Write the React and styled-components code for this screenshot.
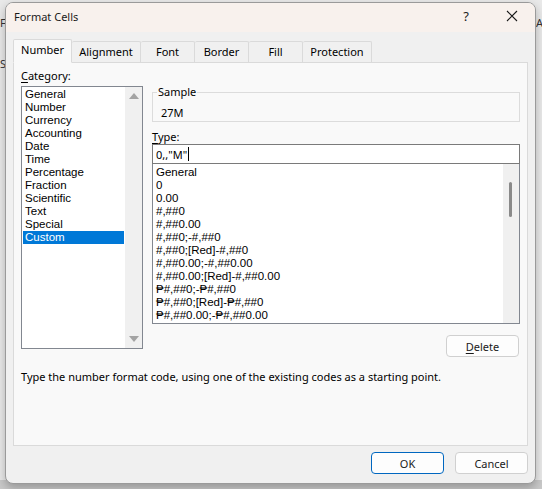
import React from 'react';
import styled, { createGlobalStyle } from 'styled-components';

const categories = [
  'General', 'Number', 'Currency', 'Accounting', 'Date', 'Time',
  'Percentage', 'Fraction', 'Scientific', 'Text', 'Special', 'Custom',
];

const formats = [
  'General',
  '0',
  '0.00',
  '#,##0',
  '#,##0.00',
  '#,##0;-#,##0',
  '#,##0;[Red]-#,##0',
  '#,##0.00;-#,##0.00',
  '#,##0.00;[Red]-#,##0.00',
  '₱#,##0;-₱#,##0',
  '₱#,##0;[Red]-₱#,##0',
  '₱#,##0.00;-₱#,##0.00',
];

const tabs = ['Number', 'Alignment', 'Font', 'Border', 'Fill', 'Protection'];
const tabWidths = [59, 69, 54, 54, 54, 69];

export default function App() {
  return (
    <>
      <GlobalStyle />
      <Desktop>
        <BackLetter style={{ left: 0, top: 16 }}>F</BackLetter>
        <BackLetter style={{ left: 0, top: 57 }}>St</BackLetter>
        <BackLetter style={{ left: 536, top: 16 }}>A</BackLetter>
        <Dialog>
          <TitleBar>
            <Title>Format Cells</Title>
            <TitleButton>?</TitleButton>
            <TitleButton>
              <svg width="12" height="12" viewBox="0 0 12 12">
                <path d="M1 1 L11 11 M11 1 L1 11" stroke="#1a1a1a" strokeWidth="1.1" />
              </svg>
            </TitleButton>
          </TitleBar>
          <Body>
            <TabRow>
              {tabs.map((t, i) => (
                <Tab key={t} $active={i === 0} $w={tabWidths[i]}>{t}</Tab>
              ))}
            </TabRow>
            <Panel>
              <Columns>
                <LeftCol>
                  <Label><u>C</u>ategory:</Label>
                  <CategoryBox>
                    <Items>
                      {categories.map((c) => (
                        <CatItem key={c} $selected={c === 'Custom'}>{c}</CatItem>
                      ))}
                    </Items>
                    <ScrollTrack>
                      <Arrow $up />
                      <Arrow />
                    </ScrollTrack>
                  </CategoryBox>
                </LeftCol>
                <RightCol>
                  <SampleGroup>
                    <legend>Sample</legend>
                    <SampleValue>27M</SampleValue>
                  </SampleGroup>
                  <TypeLabel><u>T</u>ype:</TypeLabel>
                  <TypeInput>0,,"M"<Caret /></TypeInput>
                  <FormatBox>
                    <FormatItems>
                      {formats.map((f) => (
                        <FormatItem key={f}>{f}</FormatItem>
                      ))}
                    </FormatItems>
                    <FormatScroll>
                      <Thumb />
                    </FormatScroll>
                  </FormatBox>
                  <DeleteRow>
                    <Button><u>D</u>elete</Button>
                  </DeleteRow>
                </RightCol>
              </Columns>
              <Hint>Type the number format code, using one of the existing codes as a starting point.</Hint>
            </Panel>
            <Footer>
              <Button $default>OK</Button>
              <Button>Cancel</Button>
            </Footer>
          </Body>
        </Dialog>
      </Desktop>
    </>
  );
}

const GlobalStyle = createGlobalStyle`
  body {
    margin: 0;
    font-family: "Noto Sans", "Open Sans", sans-serif;
    font-size: 11px;
    color: #000;
  }
  u { text-decoration-thickness: 1px; text-underline-offset: 2px; }
`;

const Desktop = styled.div`
  position: relative;
  width: 542px;
  height: 489px;
  overflow: hidden;
  background: linear-gradient(to bottom, #e9e9e9 0, #e9e9e9 480px, #c9c9c9 480px);
  padding: 2px 0 0 5px;
  box-sizing: border-box;
`;

const BackLetter = styled.span`
  position: absolute;
  font-size: 11px;
  line-height: 14px;
  color: #333;
`;

const Dialog = styled.div`
  position: relative;
  width: 531px;
  height: 482px;
  border: 1px solid #9a9a9a;
  border-radius: 8px;
  overflow: hidden;
  box-sizing: border-box;
  background: #f0f0f0;
  box-shadow: 0 4px 10px rgba(0, 0, 0, 0.25);
  display: flex;
  flex-direction: column;
`;

const TitleBar = styled.div`
  height: 29px;
  flex: none;
  display: flex;
  align-items: center;
  background: #f8f1ed;
  padding: 0 0 3px 8px;
  box-sizing: border-box;
`;

const Title = styled.div`
  flex: 1;
  color: #1a1a1a;
`;

const TitleButton = styled.div`
  width: 46px;
  height: 26px;
  display: flex;
  align-items: center;
  justify-content: center;
  font-size: 13px;
  color: #1a1a1a;
`;

const Body = styled.div`
  flex: 1;
  display: flex;
  flex-direction: column;
  padding: 7px 7px 0 7px;
`;

const TabRow = styled.div`
  display: flex;
  align-items: flex-end;
  height: 23px;
  position: relative;
  z-index: 1;
`;

const Tab = styled.div`
  width: ${(p) => p.$w}px;
  height: ${(p) => (p.$active ? 24 : 21)}px;
  box-sizing: border-box;
  display: flex;
  align-items: center;
  justify-content: center;
  border: 1px solid #dadada;
  border-bottom: ${(p) => (p.$active ? '1px solid #f9f9f9' : 'none')};
  border-left: ${(p) => (p.$active ? '1px solid #dadada' : 'none')};
  background: ${(p) => (p.$active ? '#f9f9f9' : '#f0f0f0')};
  margin-bottom: ${(p) => (p.$active ? '-1px' : '0')};
  padding-bottom: ${(p) => (p.$active ? '4px' : '2px')};
  border-radius: 2px 2px 0 0;
`;

const Panel = styled.div`
  height: 384px;
  box-sizing: border-box;
  background: #f9f9f9;
  border: 1px solid #dadada;
  padding: 5px 7px 0 7px;
  display: flex;
  flex-direction: column;
`;

const Columns = styled.div`
  display: flex;
  gap: 9px;
`;

const LeftCol = styled.div`
  width: 122px;
  display: flex;
  flex-direction: column;
`;

const Label = styled.div`
  height: 16px;
  line-height: 16px;
  margin-bottom: 2px;
`;

const CategoryBox = styled.div`
  height: 263px;
  box-sizing: border-box;
  border: 1px solid #828790;
  background: #fff;
  display: flex;
`;

const Items = styled.div`
  flex: 1;
  padding: 1px;
`;

const CatItem = styled.div`
  height: 13px;
  line-height: 13px;
  padding-left: 2px;
  font-family: "Liberation Sans", sans-serif;
  font-size: 11.5px;
  background: ${(p) => (p.$selected ? '#0078d7' : 'transparent')};
  color: ${(p) => (p.$selected ? '#fff' : '#000')};
`;

const ScrollTrack = styled.div`
  width: 17px;
  background: #f0f0f0;
  display: flex;
  flex-direction: column;
  justify-content: space-between;
  align-items: center;
  padding: 6px 0;
`;

const Arrow = styled.div`
  width: 0;
  height: 0;
  border-left: 5px solid transparent;
  border-right: 5px solid transparent;
  ${(p) => (p.$up ? 'border-bottom: 6px solid #a3a3a3;' : 'border-top: 6px solid #a3a3a3;')}
`;

const RightCol = styled.div`
  flex: 1;
  display: flex;
  flex-direction: column;
  padding-top: 16px;
`;

const SampleGroup = styled.fieldset`
  margin: 0;
  height: 38px;
  box-sizing: border-box;
  border: 1px solid #dcdcdc;
  border-radius: 0;
  padding: 0 0 0 8px;

  legend {
    padding: 0 1px;
    margin-left: -4px;
    line-height: 16px;
  }
`;

const SampleValue = styled.div`
  line-height: 14px;
  margin-top: 6px;
`;

const TypeLabel = styled.div`
  height: 15px;
  line-height: 15px;
  margin-top: 7px;
`;

const TypeInput = styled.div`
  height: 20px;
  box-sizing: border-box;
  border: 1px solid #7a7a7a;
  background: #fff;
  display: flex;
  align-items: center;
  padding-left: 3px;
`;

const Caret = styled.span`
  display: inline-block;
  width: 1px;
  height: 14px;
  background: #000;
  margin-left: 1px;
`;

const FormatBox = styled.div`
  height: 160px;
  box-sizing: border-box;
  border: 1px solid #828790;
  border-top: none;
  background: #fff;
  display: flex;
`;

const FormatItems = styled.div`
  flex: 1;
  padding: 2px 3px;
  overflow: hidden;
`;

const FormatItem = styled.div`
  height: 13px;
  line-height: 13px;
  white-space: nowrap;
  font-family: "Liberation Sans", sans-serif;
  font-size: 11.5px;
`;

const FormatScroll = styled.div`
  width: 16px;
  background: #f0f0f0;
  position: relative;
`;

const Thumb = styled.div`
  position: absolute;
  left: 6px;
  top: 18px;
  width: 3px;
  height: 35px;
  border-radius: 2px;
  background: #8a8a8a;
`;

const DeleteRow = styled.div`
  display: flex;
  justify-content: flex-end;
  margin-top: 11px;
  padding-right: 1px;
`;

const Button = styled.div`
  width: 73px;
  height: 22px;
  box-sizing: border-box;
  display: flex;
  align-items: center;
  justify-content: center;
  background: #fdfdfd;
  border: 1px solid ${(p) => (p.$default ? '#0067c0' : '#d0d0d0')};
  border-radius: 4px;
  color: #1a1a1a;
`;

const Hint = styled.div`
  margin-top: 12px;
  line-height: 16px;
`;

const Footer = styled.div`
  display: flex;
  justify-content: flex-end;
  gap: 11px;
  padding-top: 6px;
`;
